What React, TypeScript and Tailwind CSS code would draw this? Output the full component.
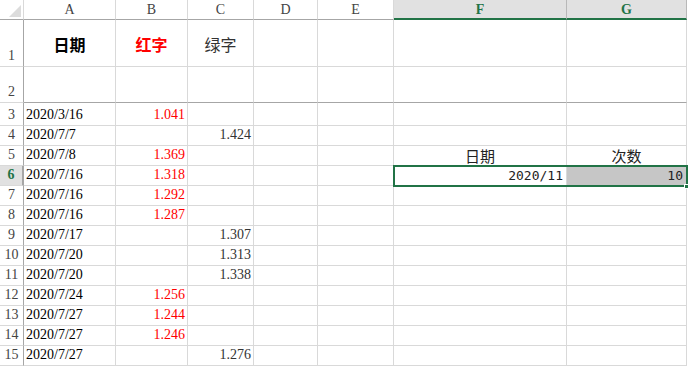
import type { ReactNode } from "react";

const serif = "font-['Liberation_Serif',serif]";
const cjk = "font-['Noto_Sans_CJK_SC',sans-serif]";

const cols = ["A", "B", "C", "D", "E", "F", "G"];

type Row = { n: number; date: string; red?: string; green?: string };

const rows: Row[] = [
  { n: 3, date: "2020/3/16", red: "1.041" },
  { n: 4, date: "2020/7/7", green: "1.424" },
  { n: 5, date: "2020/7/8", red: "1.369" },
  { n: 6, date: "2020/7/16", red: "1.318" },
  { n: 7, date: "2020/7/16", red: "1.292" },
  { n: 8, date: "2020/7/16", red: "1.287" },
  { n: 9, date: "2020/7/17", green: "1.307" },
  { n: 10, date: "2020/7/20", green: "1.313" },
  { n: 11, date: "2020/7/20", green: "1.338" },
  { n: 12, date: "2020/7/24", red: "1.256" },
  { n: 13, date: "2020/7/27", red: "1.244" },
  { n: 14, date: "2020/7/27", red: "1.246" },
  { n: 15, date: "2020/7/27", green: "1.276" },
];

function Cell({ className = "", children }: { className?: string; children?: ReactNode }) {
  return (
    <div className={"border-r border-b border-[#d9d9d9] overflow-hidden whitespace-nowrap leading-none " + className}>
      {children}
    </div>
  );
}

function RowHead({ n, className = "" }: { n: number; className?: string }) {
  return (
    <div
      className={
        "border-r border-b border-r-[#a6a6a6] border-b-[#d9d9d9] flex justify-center items-end pb-[3px] leading-none text-[14px] text-[#444] " +
        serif +
        " " +
        className
      }
    >
      {n}
    </div>
  );
}

export default function App() {
  return (
    <div className="w-[689px] h-[368px] bg-white overflow-hidden">
      <div className="relative grid grid-cols-[24px_92px_72px_66px_64px_76px_173px_120px] grid-rows-[20px_47px_36px_23px_repeat(12,20px)] w-[687px]">
        {/* column headers */}
        <div className="border-r border-b border-r-[#d9d9d9] border-b-[#a6a6a6] relative">
          <div className="absolute right-[2px] bottom-[2px] w-0 h-0 border-l-[12px] border-l-transparent border-b-[12px] border-b-[#dcdcdc]" />
        </div>
        {cols.map((c) => {
          const active = c === "F" || c === "G";
          return (
            <div
              key={c}
              className={
                "flex items-center justify-center text-[14px] border-r " +
                serif +
                (active
                  ? " bg-[#e1e1e1] border-r-[#b8b8b8] border-b-2 border-b-[#217346] text-[#217346] font-bold"
                  : " border-r-[#d9d9d9] border-b border-b-[#a6a6a6] text-[#444]")
              }
            >
              {c}
            </div>
          );
        })}

        {/* row 1 */}
        <RowHead n={1} />
        <Cell className={"flex items-center justify-center pt-[2px] text-[16px] font-bold text-black " + cjk}>日期</Cell>
        <Cell className={"flex items-center justify-center pt-[2px] text-[16px] font-bold text-[#ff0000] " + cjk}>红字</Cell>
        <Cell className={"flex items-center justify-center pt-[2px] text-[16px] text-[#333] " + cjk}>绿字</Cell>
        <Cell />
        <Cell />
        <Cell />
        <Cell />

        {/* row 2 */}
        <RowHead n={2} className="border-b-[#a6a6a6]" />
        {cols.map((c) => (
          <Cell key={c} className="border-b-[#a6a6a6]" />
        ))}

        {rows.map((r) => {
          const sel = r.n === 6;
          return [
            <RowHead
              key={"h" + r.n}
              n={r.n}
              className={sel ? "bg-[#e1e1e1] border-r-2 border-r-[#217346] text-[#217346] font-bold" : ""}
            />,
            <Cell key={"a" + r.n} className={"flex items-end pb-[3px] pl-[2px] text-[14px] text-black " + serif}>
              {r.date}
            </Cell>,
            <Cell key={"b" + r.n} className={"flex items-end pb-[3px] justify-end pr-[2px] text-[14px] text-[#ff0000] " + serif}>
              {r.red}
            </Cell>,
            <Cell key={"c" + r.n} className={"flex items-end pb-[3px] justify-end pr-[2px] text-[14px] text-[#333] " + serif}>
              {r.green}
            </Cell>,
            <Cell key={"d" + r.n} />,
            <Cell key={"e" + r.n} />,
            <Cell
              key={"f" + r.n}
              className={
                r.n === 5
                  ? "flex items-end pb-[2px] justify-center text-[15px] text-[#222] " + cjk
                  : sel
                  ? "flex items-end pb-[3px] justify-end pr-[3px] text-[13px] text-[#222] font-['DejaVu_Sans_Mono',monospace]"
                  : ""
              }
            >
              {r.n === 5 ? "日期" : sel ? "2020/11" : null}
            </Cell>,
            <Cell
              key={"g" + r.n}
              className={
                r.n === 5
                  ? "flex items-end pb-[2px] justify-center text-[15px] text-[#222] " + cjk
                  : sel
                  ? "bg-[#c6c6c6] flex items-end pb-[3px] justify-end pr-[3px] text-[13px] text-[#222] font-['DejaVu_Sans_Mono',monospace]"
                  : ""
              }
            >
              {r.n === 5 ? "次数" : sel ? "10" : null}
            </Cell>,
          ];
        })}

        {/* selection range F6:G6 */}
        <div className="absolute left-[393px] top-[165px] w-[295px] h-[22px] border-2 border-[#217346] pointer-events-none" />
        <div className="absolute left-[684px] top-[184px] w-[5px] h-[5px] bg-[#217346] border border-white pointer-events-none" />
      </div>
    </div>
  );
}
